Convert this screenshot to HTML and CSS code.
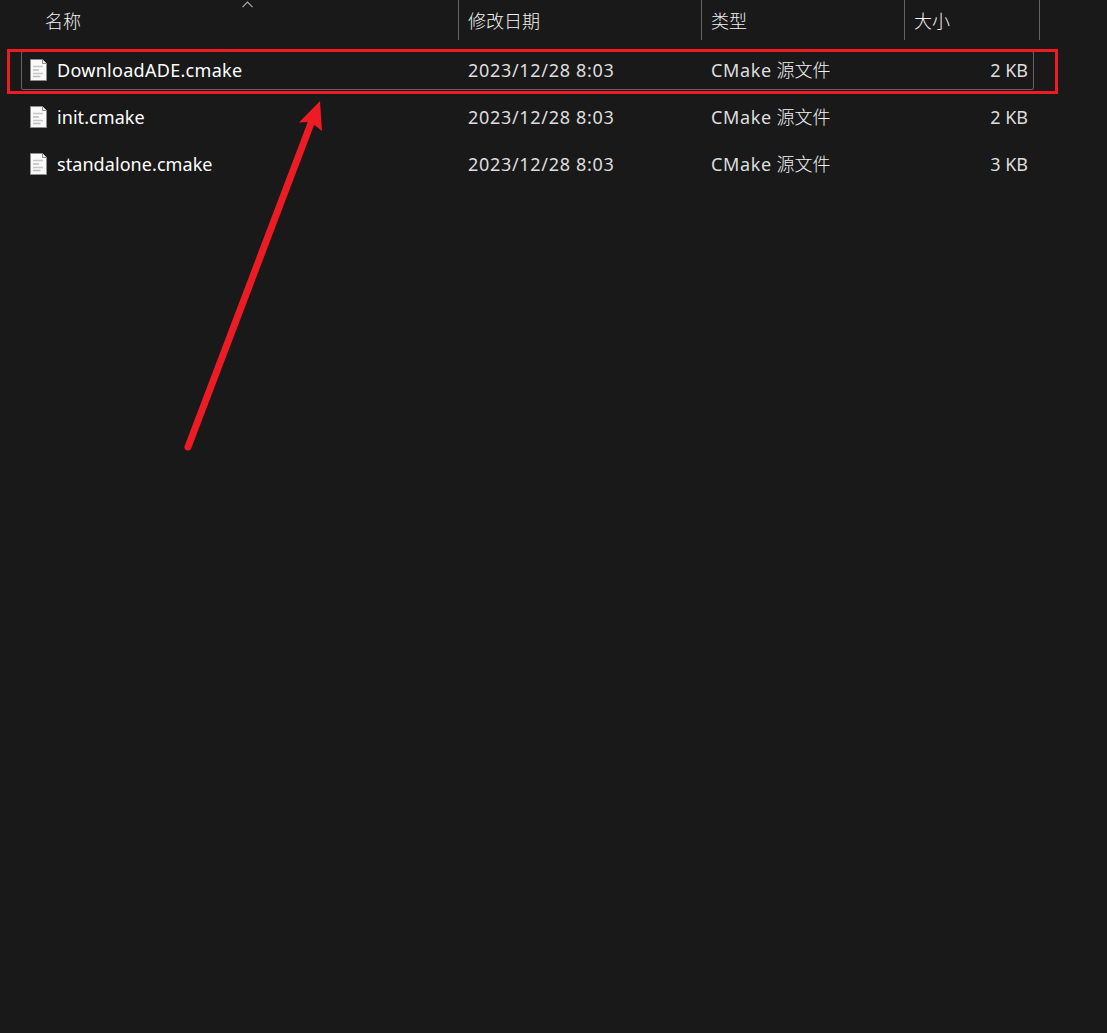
FILE: index.html
```html
<!DOCTYPE html>
<html lang="zh-CN">
<head>
<meta charset="utf-8">
<title>文件列表</title>
<link rel="stylesheet" href="styles.css">
</head>
<body>
<svg class="defs" aria-hidden="true">
  <symbol id="file" viewBox="0 0 17 22">
    <path d="M.5.5H12.5L16.5 4.5V21.5H.5Z" fill="#f9f9f9" stroke="#8b8e8c"/>
    <path d="M12.5.5V4.5H16.5" fill="#eee" stroke="#8b8e8c"/>
    <path d="M3 7.500H13M3 14.500H13" stroke="#c8c8c8" stroke-width="1.4"/>
    <path d="M3 11H9M3 17.500H10.500" stroke="#bdbdbd" stroke-width="1.4"/>
  </symbol>
</svg>
<main class="list">
  <header class="columns">
    <div class="head head-name">名称
      <svg class="sort" width="12" height="7" viewBox="0 0 12 7"><path d="M.5 6.200 5.500 1.200 10.500 6.200" fill="none" stroke="#aaa" stroke-width="1.2"/></svg>
    </div>
    <div class="head">修改日期</div>
    <div class="head">类型</div>
    <div class="head">大小</div>
  </header>
  <section class="rows">
    <div class="row focused">
      <div class="name"><svg class="icon"><use href="#file"/></svg><span class="mixed-case">DownloadADE.cmake</span></div>
      <div class="date">2023/12/28 8:03</div>
      <div class="type"><span>CMake</span> 源文件</div>
      <div class="size">2 KB</div>
    </div>
    <div class="row">
      <div class="name"><svg class="icon"><use href="#file"/></svg><span>init.cmake</span></div>
      <div class="date">2023/12/28 8:03</div>
      <div class="type"><span>CMake</span> 源文件</div>
      <div class="size">2 KB</div>
    </div>
    <div class="row">
      <div class="name"><svg class="icon"><use href="#file"/></svg><span>standalone.cmake</span></div>
      <div class="date">2023/12/28 8:03</div>
      <div class="type"><span>CMake</span> 源文件</div>
      <div class="size">3 KB</div>
    </div>
  </section>
</main>
<div class="highlight"></div>
<svg class="arrow" width="144" height="356" viewBox="184 98 144 356">
  <path d="M188 447 311.500 122" stroke="#ed1c24" stroke-width="7" stroke-linecap="round"/>
  <path d="M320 101 299 122.500 308 122 314.500 125 322 131Z" fill="#ed1c24"/>
</svg>
</body>
</html>
```
FILE: styles.css
```css
* { box-sizing: border-box; }
body {
  margin: 0;
  height: 1033px;
  overflow: hidden;
  background: #191919;
  color: #dedede;
  font: 18px/24px "Noto Sans", "Noto Sans CJK SC", sans-serif;
}
.defs { position: absolute; width: 0; height: 0; }
.columns, .row {
  display: grid;
  grid-template-columns: 438px 243px 203px 129px;
}
.columns {
  grid-template-columns: 459px 243px 203px 135px;
  height: 40px;
}
.head {
  position: relative;
  padding: 8px 0 0 9px;
  border-right: 1px solid #636363;
  color: #f2f2f2;
  font-family: "Noto Sans CJK SC", sans-serif;
  font-weight: 300;
}
.head-name { padding-left: 45px; }
.sort { position: absolute; left: 242px; top: 1px; }
.rows {
  display: grid;
  gap: 8px;
  padding: 11px 0 0 21px;
}
.row {
  width: 1013px;
  height: 39px;
  border: 1px solid transparent;
  border-radius: 2px;
  line-height: 37px;
  white-space: nowrap;
}
.focused { border-color: #636363; }
.name {
  display: flex;
  align-items: flex-start;
  gap: 10px;
  padding-left: 8px;
  color: #fff;
  letter-spacing: .07px;
}
.mixed-case { letter-spacing: .29px; }
.icon { width: 17px; height: 22px; margin-top: 7px; }
.date, .type { padding-left: 8px; }
.date { letter-spacing: .69px; }
.type { color: #f2f2f2; font-weight: 300; }
.type span { color: #dedede; font-weight: 400; letter-spacing: .65px; }
.size { padding-right: 7px; text-align: right; }
.highlight {
  position: absolute;
  left: 7px;
  top: 49px;
  width: 1051px;
  height: 45px;
  border: 3px solid #ed1c24;
}
.arrow { position: absolute; left: 184px; top: 98px; }
```
